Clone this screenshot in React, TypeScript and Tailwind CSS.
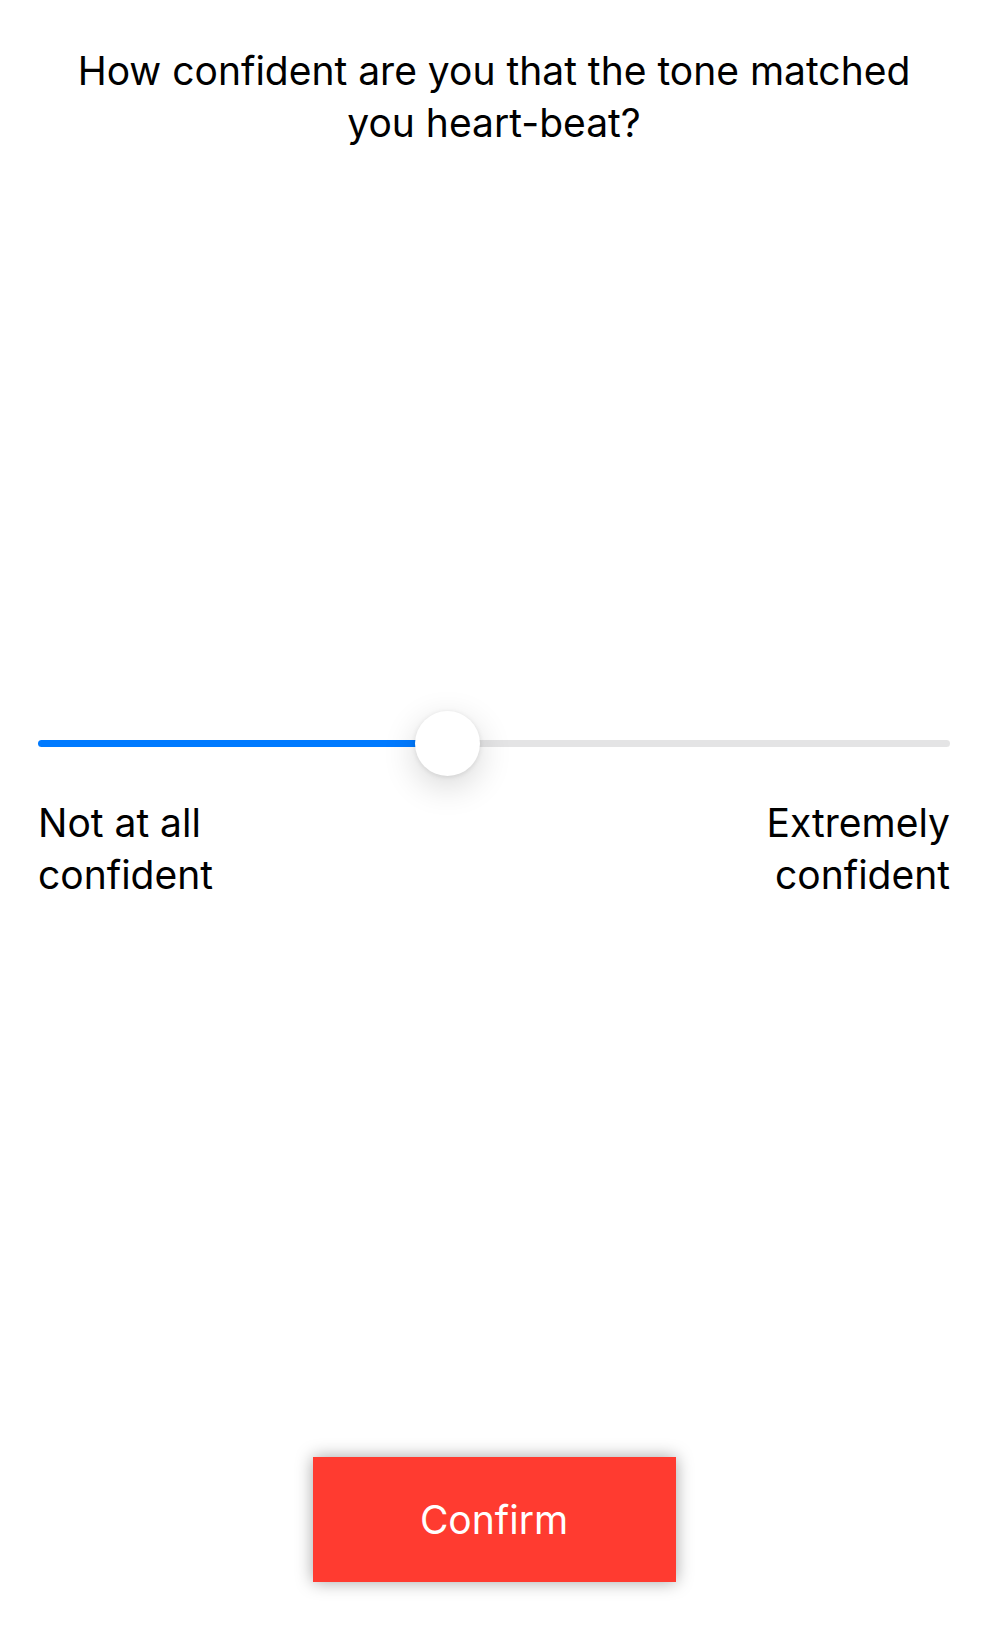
import { useState } from "react";

export default function App() {
  const [value, setValue] = useState(445);
  const percent = value / 10;
  return (
    <main className="flex min-h-screen flex-col bg-white px-[38px] pt-[45px] pb-[46px] font-['Inter',sans-serif] text-[39px] leading-[52px] text-black">
      <h1 className="px-5 text-center">
        How confident are you that the tone matched you heart-beat?
      </h1>
      <section className="flex flex-1 flex-col justify-center pt-[34px]">
        <input
          type="range"
          min={0}
          max={1000}
          value={value}
          aria-label="Confidence"
          onChange={(e) => setValue(Number(e.target.value))}
          style={{
            backgroundImage: `linear-gradient(to right, #007aff ${percent}%, #e4e4e5 ${percent}%)`,
          }}
          className="h-[7px] w-full appearance-none rounded-full [&::-webkit-slider-thumb]:size-[65px] [&::-webkit-slider-thumb]:appearance-none [&::-webkit-slider-thumb]:rounded-full [&::-webkit-slider-thumb]:bg-white [&::-webkit-slider-thumb]:shadow-[0_10px_34px_rgba(0,0,0,0.16),0_1px_5px_rgba(0,0,0,0.1)]"
        />
        <div className="mt-[50px] flex justify-between">
          <p className="w-[200px]">Not at all confident</p>
          <p className="w-[200px] text-right">Extremely confident</p>
        </div>
      </section>
      <button
        type="button"
        className="h-[125px] w-[363px] self-center bg-[#ff3b30] text-white shadow-[0_0_16px_rgba(0,0,0,0.36)]"
      >
        Confirm
      </button>
    </main>
  );
}
